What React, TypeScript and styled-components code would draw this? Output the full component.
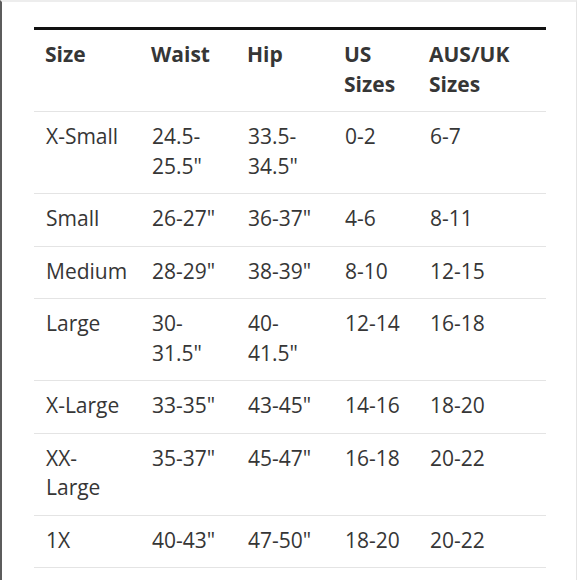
import React from "react";
import styled, { createGlobalStyle } from "styled-components";

const GlobalStyle = createGlobalStyle`
  html, body {
    margin: 0;
    padding: 0;
    background: #fff;
  }
  body {
    font-family: "Open Sans", "Liberation Sans", Arial, sans-serif;
  }
`;

const Frame = styled.div`
  box-sizing: border-box;
  width: 577px;
  height: 580px;
  border-left: 2px solid #5c5c5c;
  border-top: 2px solid #ededed;
  border-right: 1px solid #e4e4e4;
  padding: 25px 0 0 32px;
  overflow: hidden;
`;

const Table = styled.table`
  border-collapse: collapse;
  table-layout: fixed;
  width: 512px;
  border-top: 3px solid #111;
  color: #363636;
  font-size: 21px;
  line-height: 29.5px;
`;

const HeadCell = styled.th`
  text-align: left;
  vertical-align: top;
  font-weight: 700;
  padding: 10px 11px 12px;
  border-bottom: 1px solid #e4e4e4;
`;

const Cell = styled.td`
  vertical-align: top;
  font-weight: 400;
  padding: 10px 11px 12px 12px;
  border-bottom: 1px solid #e4e4e4;
`;

const columns = [
  { label: "Size", width: 106 },
  { label: "Waist", width: 96 },
  { label: "Hip", width: 97 },
  { label: "US Sizes", width: 85 },
  { label: "AUS/UK Sizes", width: 128 },
];

const rows = [
  ["X-Small", "24.5-25.5\"", "33.5-34.5\"", "0-2", "6-7"],
  ["Small", "26-27\"", "36-37\"", "4-6", "8-11"],
  ["Medium", "28-29\"", "38-39\"", "8-10", "12-15"],
  ["Large", "30-31.5\"", "40-41.5\"", "12-14", "16-18"],
  ["X-Large", "33-35\"", "43-45\"", "14-16", "18-20"],
  ["XX-Large", "35-37\"", "45-47\"", "16-18", "20-22"],
  ["1X", "40-43\"", "47-50\"", "18-20", "20-22"],
];

const App = () => {
  return (
    <>
      <GlobalStyle />
      <Frame>
        <Table>
          <colgroup>
            {columns.map((c) => (
              <col key={c.label} style={{ width: c.width }} />
            ))}
          </colgroup>
          <thead>
            <tr>
              {columns.map((c) => (
                <HeadCell key={c.label}>{c.label}</HeadCell>
              ))}
            </tr>
          </thead>
          <tbody>
            {rows.map((r) => (
              <tr key={r[0]}>
                {r.map((v, i) => (
                  <Cell key={i}>{v}</Cell>
                ))}
              </tr>
            ))}
          </tbody>
        </Table>
      </Frame>
    </>
  );
};

export default App;
